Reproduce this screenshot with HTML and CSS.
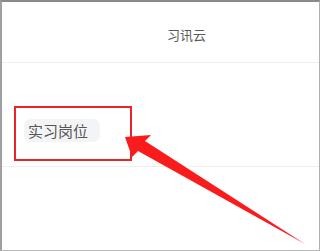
FILE: index.html
```html
<!DOCTYPE html>
<html lang="zh">
<head>
<meta charset="utf-8">
<link rel="stylesheet" href="styles.css">
</head>
<body>
<div class="frame">
  <header class="header"><span class="title">习讯云</span></header>
  <section class="section">
    <div class="highlight">
      <span class="chip">实习岗位</span>
    </div>
  </section>
  <div class="rest"></div>
  <svg class="arrow" width="320" height="251" viewBox="0 0 320 251">
    <polygon points="125,137 151,135 145,141 305,244 138,151 132,157" fill="#fa1c1c"/>
  </svg>
</div>
</body>
</html>
```
FILE: styles.css
```css
html, body {
  margin: 0;
  padding: 0;
  background: #fff;
}
.frame {
  position: relative;
  width: 320px;
  height: 251px;
  box-sizing: border-box;
  border-top: 2px solid #8a8a8a;
  border-left: 2px solid #a0a0a0;
  border-right: 1px solid #b0b0b0;
  border-bottom: 1px solid #b8b8b8;
  background: #fff;
  font-family: "Noto Sans CJK SC", "Noto Sans", sans-serif;
  overflow: hidden;
}
.header {
  height: 61px;
  border-bottom: 1px solid #f0f0f0;
  box-sizing: border-box;
  padding-left: 165px;
  padding-top: 19px;
}
.title {
  font-size: 13px;
  line-height: 18px;
  color: #5a5a5a;
}
.section {
  height: 104px;
  border-bottom: 1px solid #f0f0f0;
  box-sizing: border-box;
  padding-top: 43px;
  padding-left: 12px;
}
.highlight {
  width: 118px;
  height: 55px;
  box-sizing: border-box;
  border: 2px solid #e8262a;
  padding: 10px 0 0 8px;
}
.chip {
  display: inline-block;
  background: #f3f4f6;
  border-radius: 7px;
  padding: 2px 12px 2px 4px;
  font-size: 15px;
  line-height: 19px;
  color: #555;
}
.arrow {
  position: absolute;
  left: -2px;
  top: -2px;
}
```
